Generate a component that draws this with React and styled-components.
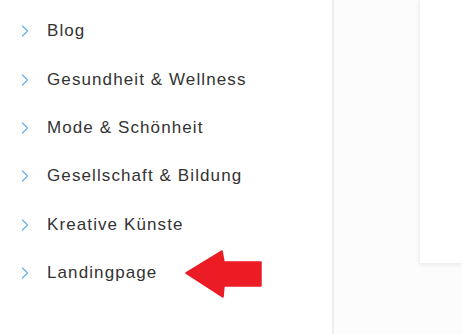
import { createGlobalStyle, styled } from "styled-components";

const GlobalStyle = createGlobalStyle`
  html, body {
    margin: 0;
    padding: 0;
    background: #ffffff;
  }
  body {
    font-family: "Liberation Sans", Arial, sans-serif;
  }
`;

const categories = [
  "Blog",
  "Gesundheit & Wellness",
  "Mode & Schönheit",
  "Gesellschaft & Bildung",
  "Kreative Künste",
  "Landingpage",
];

const Chevron = () => (
  <svg width="8" height="12" viewBox="0 0 8 12" fill="none">
    <polyline
      points="1.5,1 6.5,6 1.5,11"
      stroke="#6cb0ef"
      strokeWidth="1.3"
      strokeLinecap="round"
      strokeLinejoin="round"
    />
  </svg>
);

const RedArrow = () => (
  <svg width="77" height="48" viewBox="0 0 77 48">
    <polygon
      points="1,23 37,1 39,12 76,12 76,36 39,36 38,47"
      fill="#ec1c24"
      stroke="#ec1c24"
      strokeWidth="1.5"
      strokeLinejoin="round"
    />
  </svg>
);

const App = () => {
  return (
    <>
      <GlobalStyle />
      <Page>
        <Sidebar>
          {categories.map((name) => (
            <Row key={name}>
              <Chevron />
              <Label>{name}</Label>
              {name === "Landingpage" && (
                <ArrowSpot>
                  <RedArrow />
                </ArrowSpot>
              )}
            </Row>
          ))}
        </Sidebar>
        <Content>
          <Card />
        </Content>
      </Page>
    </>
  );
};

const Page = styled.div`
  display: flex;
  width: 462px;
  height: 334px;
  overflow: hidden;
`;

const Sidebar = styled.nav`
  width: 332px;
  flex-shrink: 0;
  border-right: 2px solid #efefef;
  padding-top: 7px;
  box-sizing: content-box;
`;

const Row = styled.div`
  display: flex;
  align-items: center;
  height: 48.4px;
  padding-left: 21px;
  cursor: pointer;
`;

const Label = styled.span`
  margin-left: 18px;
  font-size: 17px;
  letter-spacing: 1.1px;
  color: #333333;
  white-space: nowrap;
`;

const ArrowSpot = styled.span`
  display: flex;
  margin-left: 28px;
  margin-top: 1px;
`;

const Content = styled.main`
  flex: 1;
  background: #fcfcfc;
  padding-left: 85px;
`;

const Card = styled.div`
  height: 263px;
  background: #ffffff;
  border-left: 1px solid #f1f1f1;
  box-shadow: 0 2px 4px rgba(0, 0, 0, 0.07);
`;

export default App;
